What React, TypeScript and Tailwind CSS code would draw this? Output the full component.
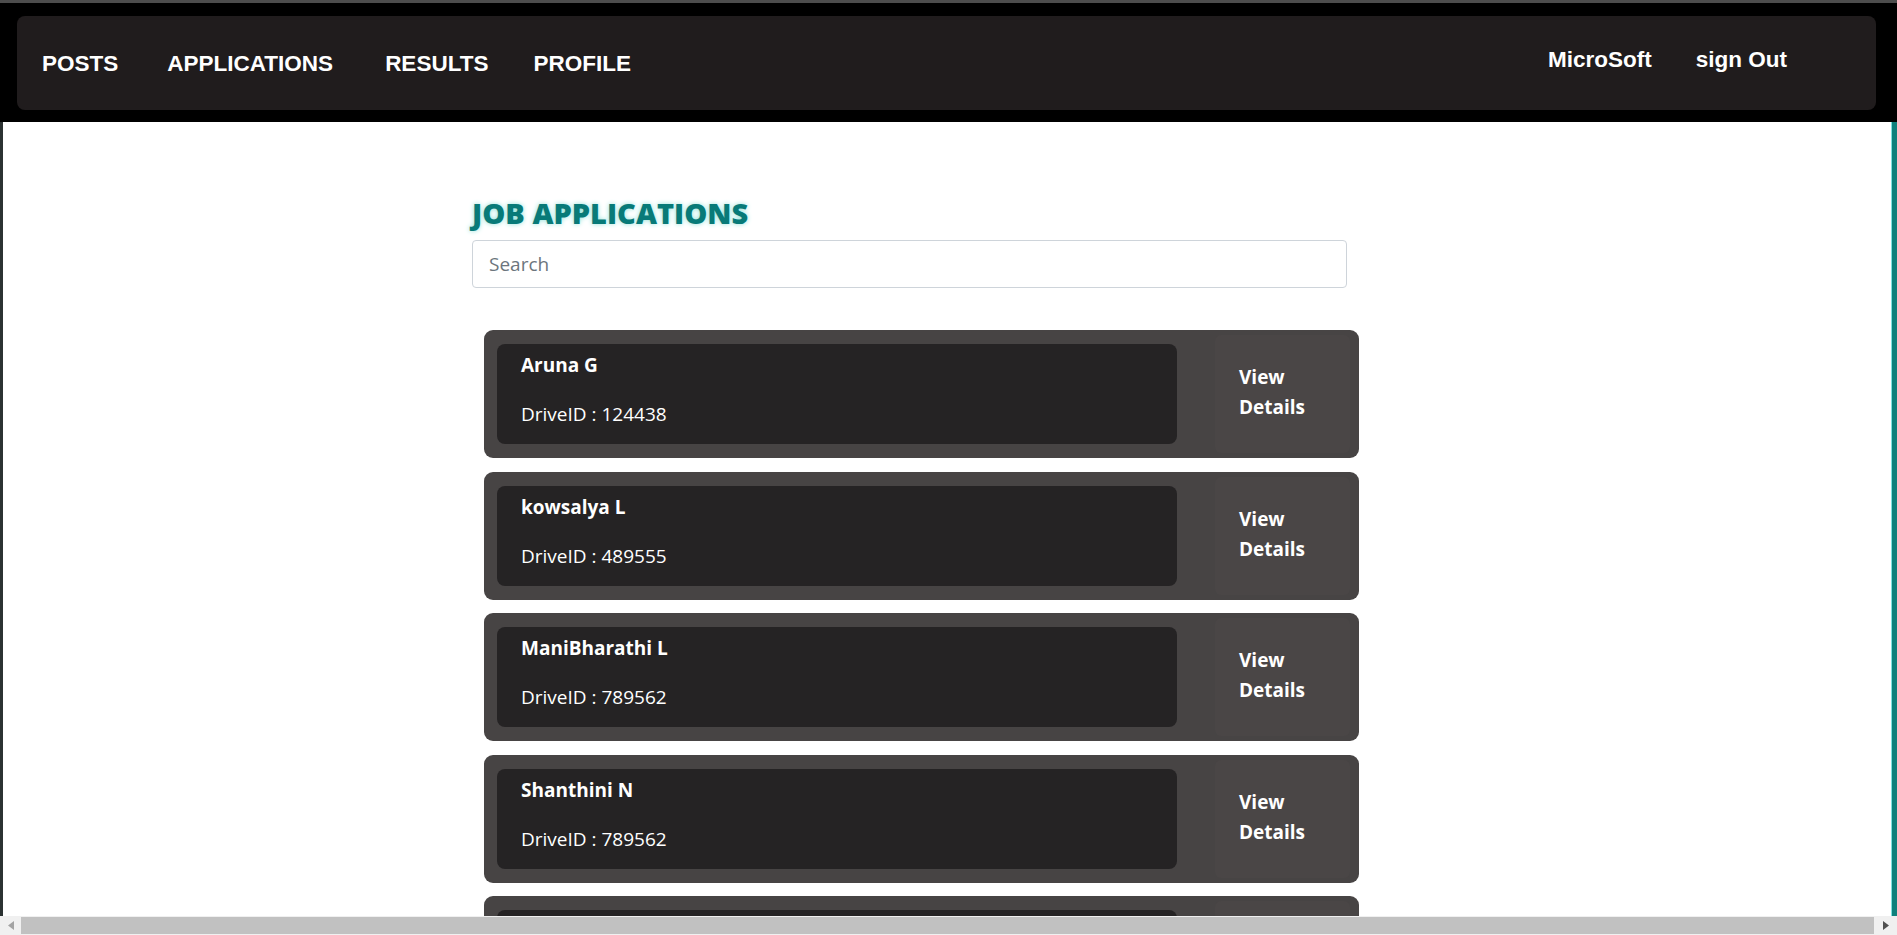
const applications = [
  { name: 'Aruna G', driveId: '124438' },
  { name: 'kowsalya L', driveId: '489555' },
  { name: 'ManiBharathi L', driveId: '789562' },
  { name: 'Shanthini N', driveId: '789562' },
  { name: 'Priya S', driveId: '124438' },
];

const navLinks = [
  { label: 'POSTS', gap: '' },
  { label: 'APPLICATIONS', gap: 'ml-[49px]' },
  { label: 'RESULTS', gap: 'ml-[52px]' },
  { label: 'PROFILE', gap: 'ml-[45px]' },
];

function Navbar() {
  return (
    <header className="bg-black pt-[13px] pb-[12px] pl-[17px] pr-[21px]">
      <nav className="h-[94px] rounded-lg bg-[#201c1d] flex items-center justify-between pl-[25px] pr-[89px] font-['Liberation_Sans',Arial,sans-serif] text-[22.5px] font-bold text-white">
        <div className="flex items-center mt-[1px]">
          {navLinks.map((link) => (
            <a key={link.label} className={`${link.gap} cursor-pointer`}>
              {link.label}
            </a>
          ))}
        </div>
        <div className="flex items-center gap-[44px] mb-[6px]">
          <span>MicroSoft</span>
          <a className="cursor-pointer">sign Out</a>
        </div>
      </nav>
    </header>
  );
}

function ApplicationCard({ name, driveId }: { name: string; driveId: string }) {
  return (
    <div className="flex h-[128px] w-[875px] shrink-0 rounded-[9px] bg-[#474444] mb-[13.5px]">
      <div className="w-[680px] my-[14px] ml-[13px] rounded-lg bg-[#252324] pl-[24px] pt-[8px] text-white">
        <div className="text-[19px] font-bold leading-[26px]">{name}</div>
        <div className="mt-[23px] text-[19px] leading-[26px]">DriveID : {driveId}</div>
      </div>
      <div className="ml-[38px] my-[5px] w-[135px] rounded-md bg-[#4a4646] flex items-center pl-[24px] pb-[4px]">
        <button className="text-left text-[19px] font-bold leading-[30px] text-white">
          View
          <br />
          Details
        </button>
      </div>
    </div>
  );
}

function FakeScrollbar() {
  return (
    <div className="h-[19px] bg-[#f0f0f0] flex items-center">
      <div className="w-[21px] h-full flex items-center justify-center">
        <svg width="6" height="9" viewBox="0 0 6 9">
          <path d="M6 0 L0 4.5 L6 9 Z" fill="#a3a3a3" />
        </svg>
      </div>
      <div className="flex-1 h-[17px] bg-[#c1c1c1]" />
      <div className="w-[23px] h-full flex items-center justify-center">
        <svg width="6" height="9" viewBox="0 0 6 9">
          <path d="M0 0 L6 4.5 L0 9 Z" fill="#505050" />
        </svg>
      </div>
    </div>
  );
}

export default function App() {
  return (
    <div className="h-[935px] w-[1897px] flex flex-col overflow-hidden bg-white font-['Open_Sans','Noto_Sans',sans-serif]">
      <div className="h-[3px] bg-[#4d4d4d]" />
      <Navbar />
      <div className="flex-1 flex min-h-0">
        <div className="w-[3px] bg-[#2b3232]" />
        <main className="flex-1 overflow-hidden pl-[469px]">
          <h2 className="mt-[73px] text-[29px] font-extrabold leading-[35px] text-[#087a78] [text-shadow:0_0_5px_#8fe0d8]">
            JOB APPLICATIONS
          </h2>
          <input
            type="text"
            placeholder="Search"
            className="mt-[10px] block h-[48px] w-[875px] rounded border border-[#ced4da] px-[16px] text-[19px] text-[#495057] placeholder:text-[#6c757d] outline-none"
          />
          <div className="mt-[42px] ml-[12px] flex flex-col">
            {applications.map((app, i) => (
              <ApplicationCard key={i} name={app.name} driveId={app.driveId} />
            ))}
          </div>
        </main>
        <div className="w-[6px] bg-[#10807c] border-l border-[#7fe0e0]" />
      </div>
      <FakeScrollbar />
    </div>
  );
}
